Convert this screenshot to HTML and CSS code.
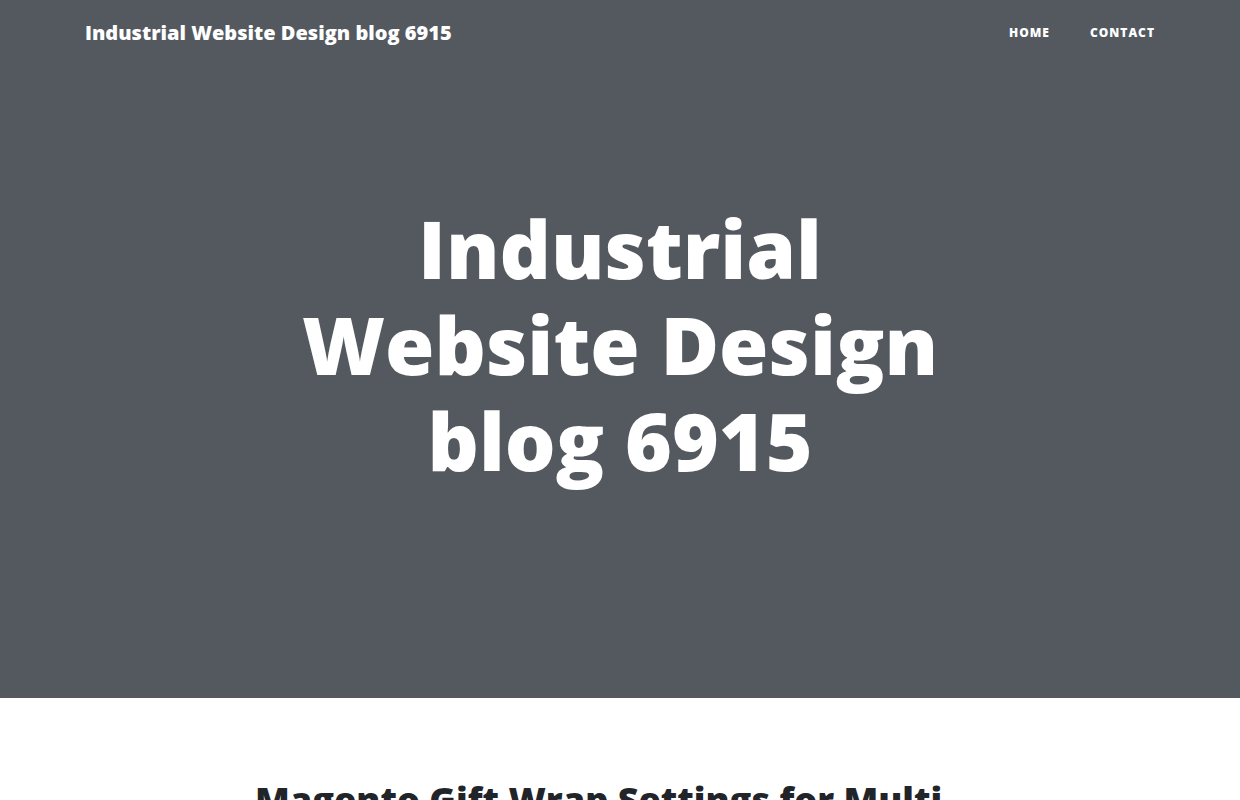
FILE: index.html
```html
<!DOCTYPE html>
<html lang="en">
<head>
  <meta charset="UTF-8">
  <meta name="viewport" content="width=device-width, initial-scale=1.0">
  <title>Industrial Website Design blog 6915</title>
  <link rel="stylesheet" href="styles.css">
</head>
<body>
  <nav class="main-nav">
    <div class="container nav-inner">
      <a class="brand" href="#">Industrial Website Design blog 6915</a>
      <ul class="nav-links">
        <li><a href="#">Home</a></li>
        <li><a href="#">Contact</a></li>
      </ul>
    </div>
  </nav>

  <header class="masthead">
    <div class="container">
      <div class="column">
        <div class="site-heading">
          <h1>Industrial Website Design blog 6915</h1>
        </div>
      </div>
    </div>
  </header>

  <main class="container">
    <div class="column">
      <div class="post-preview">
        <a href="#">
          <h2 class="post-title">Magento Gift Wrap Settings for Multi Address Checkout</h2>
        </a>
      </div>
    </div>
  </main>
</body>
</html>
```

FILE: styles.css
```css
body {
  margin: 0;
  font-family: 'Open Sans', 'Liberation Sans', sans-serif;
  font-size: 20px;
  color: #212529;
  background: #fff;
}

a {
  text-decoration: none;
  color: inherit;
}

.container {
  width: 1140px;
  margin: 0 auto;
  padding: 0 15px;
  box-sizing: border-box;
}

.column {
  width: 760px;
  margin: 0 auto;
  padding: 0 15px;
  box-sizing: border-box;
}

/* top navigation sits over the masthead */
.main-nav {
  position: absolute;
  top: 0;
  left: 0;
  right: 0;
  z-index: 10;
}

.nav-inner {
  display: flex;
  align-items: center;
  justify-content: space-between;
  height: 65px;
}

.brand {
  padding: 0 20px;
  font-size: 20px;
  font-weight: 800;
  color: #fff;
}

.nav-links {
  display: flex;
  list-style: none;
  margin: 0;
  padding: 0;
}

.nav-links a {
  display: block;
  padding: 0 20px;
  font-size: 12px;
  font-weight: 800;
  letter-spacing: 1px;
  text-transform: uppercase;
  color: #fff;
}

.masthead {
  background-color: #545960;
  margin-bottom: 50px;
}

.site-heading {
  padding: 200px 0 210px;
  text-align: center;
  color: #fff;
}

.site-heading h1 {
  margin: 0;
  font-size: 80px;
  font-weight: 800;
  line-height: 96px;
}

.post-preview {
  padding-top: 30px;
}

.post-title {
  margin: 0 0 10px;
  font-size: 36px;
  font-weight: 800;
  line-height: 1.2;
  color: #212529;
}
```
